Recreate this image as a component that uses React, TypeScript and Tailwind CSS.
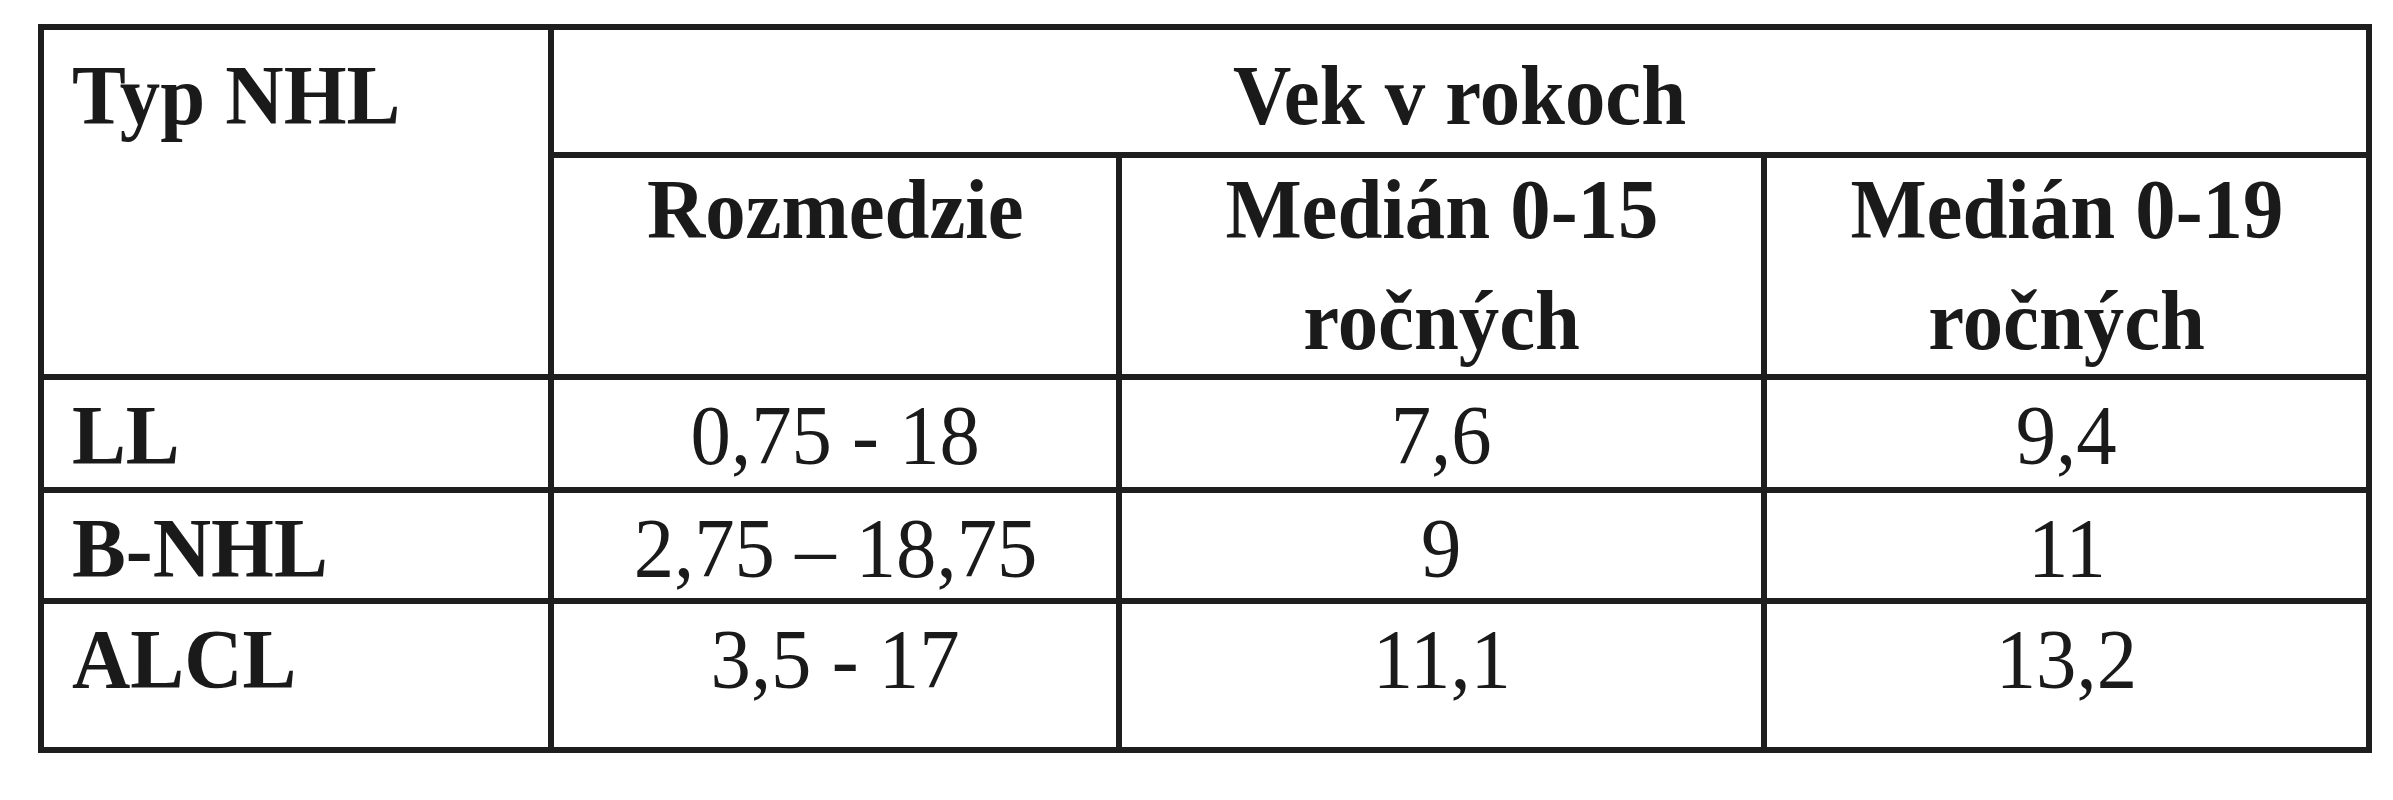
const rows = [
  { typ: "LL", range: "0,75 - 18", m15: "7,6", m19: "9,4" },
  { typ: "B-NHL", range: "2,75 – 18,75", m15: "9", m19: "11" },
  { typ: "ALCL", range: "3,5 - 17", m15: "11,1", m19: "13,2" },
];

function Txt({ children, left = false }: { children: React.ReactNode; left?: boolean }) {
  return (
    <span className={`inline-block scale-x-[0.95] ${left ? "origin-left" : "origin-center"}`}>
      {children}
    </span>
  );
}

export default function App() {
  return (
    <div className="w-[2393px] h-[800px] bg-white pl-[38px] pt-[24px] font-['Liberation_Serif',serif] text-[85px] leading-[111px] text-[#1a1a1a]">
      <div className="grid w-fit grid-cols-[504px_562px_639px_599px] grid-rows-[122px_216px_107px_105px_143px] gap-[6px] bg-[#1e1e1e] p-[6px]">
        {/* hlavička */}
        <div className="row-span-2 bg-white pl-[28px] pt-[10px] font-bold">
          <Txt left>Typ NHL</Txt>
        </div>
        <div className="col-span-3 bg-white pt-[10px] text-center font-bold">
          <Txt>Vek v rokoch</Txt>
        </div>
        <div className="bg-white text-center font-bold">
          <div className="-mt-[4px]">
            <Txt>Rozmedzie</Txt>
          </div>
        </div>
        <div className="bg-white text-center font-bold">
          <div className="-mt-[4px]">
            <Txt>Medián 0-15</Txt>
            <br />
            <Txt>ročných</Txt>
          </div>
        </div>
        <div className="bg-white text-center font-bold">
          <div className="-mt-[4px]">
            <Txt>Medián 0-19</Txt>
            <br />
            <Txt>ročných</Txt>
          </div>
        </div>

        {/* dáta */}
        {rows.map((r) => (
          <>
            <div key={r.typ + "a"} className="bg-white pl-[28px] font-bold">
              <Txt left>{r.typ}</Txt>
            </div>
            <div key={r.typ + "b"} className="bg-white text-center">
              <Txt>{r.range}</Txt>
            </div>
            <div key={r.typ + "c"} className="bg-white text-center">
              <Txt>{r.m15}</Txt>
            </div>
            <div key={r.typ + "d"} className="bg-white text-center">
              <Txt>{r.m19}</Txt>
            </div>
          </>
        ))}
      </div>
    </div>
  );
}
